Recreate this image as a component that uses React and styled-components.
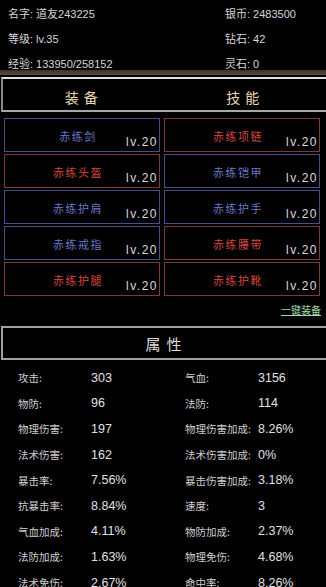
import React from "react";
import styled, { createGlobalStyle } from "styled-components";

const Global = createGlobalStyle`
  html, body { margin: 0; padding: 0; background: #000; }
  body { width: 326px; overflow: hidden; font-family: "Liberation Sans", "Noto Sans CJK SC", sans-serif; }
`;

const Page = styled.div`
  width: 326px;
  background: #000;
  color: #ddd;
`;

const Info = styled.div`
  display: grid;
  grid-template-columns: 217px 1fr;
  grid-auto-rows: 25px;
  padding: 0 0 0 8px;
  height: 70px;
  align-items: center;
`;

const InfoCell = styled.div`
  font-size: 11px;
  color: #d6d6d6;
  white-space: nowrap;
`;

const Band = styled.div`
  height: 5px;
  background: linear-gradient(#3c342a, #5a4e3c);
  margin-bottom: 2px;
`;

const TabBar = styled.div`
  display: grid;
  grid-template-columns: 1fr 1fr;
  height: 31px;
  margin-left: 1px;
  border-top: 2px solid #e2e2e2;
  border-bottom: 2px solid #a8a8a8;
  border-left: 2px solid #8a8a8a;
`;

const Tab = styled.div`
  display: flex;
  align-items: center;
  justify-content: center;
  padding-top: 4px;
  font-family: "Noto Sans CJK SC", sans-serif;
  font-size: 14px;
  letter-spacing: 5px;
  color: #e8d8b2;
`;

const Grid = styled.div`
  display: grid;
  grid-template-columns: 156px 156px;
  grid-auto-rows: 34px;
  column-gap: 4px;
  row-gap: 2px;
  padding: 6px 0 0 4px;
`;

const Item = styled.div`
  border: 1px solid ${(p) => (p.$red ? "#7c3a38" : "#48508a")};
  display: grid;
  grid-template-areas: "cell";
`;

const ItemName = styled.div`
  grid-area: cell;
  align-self: start;
  font-family: "Noto Sans CJK SC", sans-serif;
  font-size: 11px;
  letter-spacing: 1.5px;
  color: ${(p) => (p.$red ? "#d4483e" : "#6a78c6")};
  text-align: center;
  padding: 9px 8px 0 0;
  line-height: 16px;
`;

const ItemLevel = styled.div`
  grid-area: cell;
  align-self: end;
  justify-self: end;
  font-size: 12px;
  letter-spacing: 1.5px;
  color: #dcdcdc;
  line-height: 14px;
  padding: 0 1px 2px 0;
`;

const ActionRow = styled.div`
  display: flex;
  justify-content: flex-end;
  padding: 7px 5px 0 0;
  height: 24px;
  box-sizing: border-box;
`;

const ActionLink = styled.span`
  font-family: "Noto Sans CJK SC", sans-serif;
  font-size: 10px;
  color: #9edba8;
  text-decoration: underline;
  line-height: 14px;
`;

const SectionHead = styled.div`
  margin: 6px 0 0 1px;
  height: 30px;
  border: 2px solid #a0a0a0;
  border-right: none;
  display: flex;
  align-items: center;
  justify-content: center;
  padding-left: 4px;
  font-family: "Noto Sans CJK SC", sans-serif;
  font-size: 15px;
  letter-spacing: 6px;
  color: #dedede;
`;

const Stats = styled.div`
  display: grid;
  grid-template-columns: 73px 94px 73px 1fr;
  grid-auto-rows: 25.6px;
  align-items: center;
  padding: 5px 0 0 18px;
`;

const Label = styled.div`
  font-family: "Noto Sans CJK SC", sans-serif;
  font-size: 10.5px;
  color: #cfcfcf;
  white-space: nowrap;
`;

const Value = styled.div`
  font-size: 12.5px;
  color: #e0e0e0;
  white-space: nowrap;
`;

const items = [
  ["赤练剑", false],
  ["赤练项链", true],
  ["赤练头盔", true],
  ["赤练铠甲", false],
  ["赤练护肩", false],
  ["赤练护手", false],
  ["赤练戒指", false],
  ["赤练腰带", true],
  ["赤练护腿", true],
  ["赤练护靴", true],
];

const stats = [
  ["攻击:", "303", "气血:", "3156"],
  ["物防:", "96", "法防:", "114"],
  ["物理伤害:", "197", "物理伤害加成:", "8.26%"],
  ["法术伤害:", "162", "法术伤害加成:", "0%"],
  ["暴击率:", "7.56%", "暴击伤害加成:", "3.18%"],
  ["抗暴击率:", "8.84%", "速度:", "3"],
  ["气血加成:", "4.11%", "物防加成:", "2.37%"],
  ["法防加成:", "1.63%", "物理免伤:", "4.68%"],
  ["法术免伤:", "2.67%", "命中率:", "8.26%"],
];

export default function App() {
  return (
    <Page>
      <Global />
      <Info>
        <InfoCell>名字: 道友243225</InfoCell>
        <InfoCell>银币: 2483500</InfoCell>
        <InfoCell>等级: lv.35</InfoCell>
        <InfoCell>钻石: 42</InfoCell>
        <InfoCell>经验: 133950/258152</InfoCell>
        <InfoCell>灵石: 0</InfoCell>
      </Info>
      <Band />
      <TabBar>
        <Tab>装备</Tab>
        <Tab>技能</Tab>
      </TabBar>
      <Grid>
        {items.map(([name, red]) => (
          <Item key={name} $red={red}>
            <ItemName $red={red}>{name}</ItemName>
            <ItemLevel>lv.20</ItemLevel>
          </Item>
        ))}
      </Grid>
      <ActionRow>
        <ActionLink>一键装备</ActionLink>
      </ActionRow>
      <SectionHead>属性</SectionHead>
      <Stats>
        {stats.map((r) => (
          <React.Fragment key={r[0]}>
            <Label>{r[0]}</Label>
            <Value>{r[1]}</Value>
            <Label>{r[2]}</Label>
            <Value>{r[3]}</Value>
          </React.Fragment>
        ))}
      </Stats>
    </Page>
  );
}
